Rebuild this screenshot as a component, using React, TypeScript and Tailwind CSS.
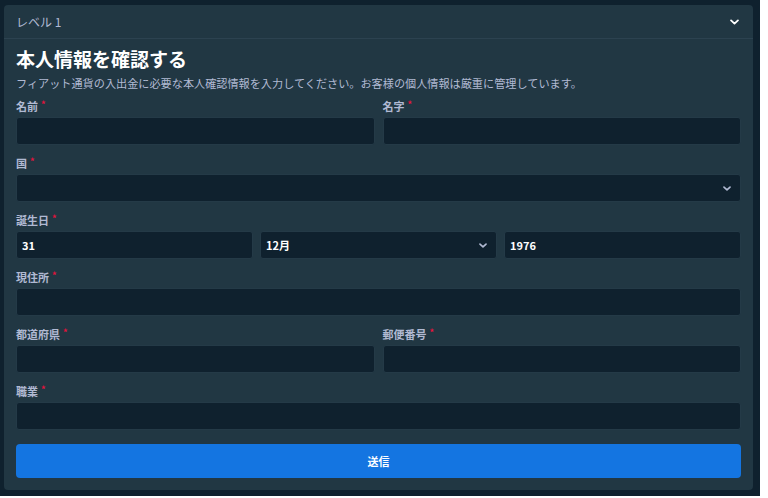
import React from 'react';

const font = { fontFamily: '"Noto Sans CJK JP", "Noto Sans", sans-serif' };

const Chevron = ({ className }: { className?: string }) => (
  <svg viewBox="0 0 10 6" className={className} fill="none">
    <path d="M1.2 1.2 5 4.8 8.8 1.2" stroke="currentColor" strokeWidth="2" strokeLinecap="round" strokeLinejoin="round" />
  </svg>
);

const Label = ({ text }: { text: string }) => (
  <div className="h-4 flex items-center text-[11px] font-bold text-[#b1bad3] leading-none">
    <span>{text}</span>
    <span className="ml-[3px] text-[#e9113c] text-[9px] -mt-[3px]">*</span>
  </div>
);

const Input = ({ value, select }: { value?: string; select?: boolean }) => (
  <div className="mt-[3px] h-7 rounded-[3px] bg-[#0f212e] border border-[#243a47] flex items-center justify-between px-[5px] text-[11px] font-bold text-white">
    <span>{value}</span>
    {select && <Chevron className="w-[8px] h-[5px] mr-[4px] text-[#b1bad3]" />}
  </div>
);

const Field = ({ label, value, select }: { label: string; value?: string; select?: boolean }) => (
  <div>
    <Label text={label} />
    <Input value={value} select={select} />
  </div>
);

export default function App() {
  return (
    <div className="w-[768px] h-[498px] bg-white" style={font}>
      <div className="w-[760px] h-[496px] bg-[#0f212e] pl-[4px] pt-[5px]">
        <div className="w-[749px] h-[485px] bg-[#213743] rounded-[4px] flex flex-col">
          {/* Header */}
          <div className="h-[34px] flex items-center justify-between pl-[12px] pr-[14px] border-b border-[#2c4250]">
            <span className="text-[12px] text-[#b1bad3]">レベル 1</span>
            <Chevron className="w-[9px] h-[6px] text-white" />
          </div>

          <div className="pl-[12px] pr-[12px] flex flex-col">
            <h1 className="mt-[8px] h-[24px] leading-[24px] text-[19px] font-bold text-white">本人情報を確認する</h1>
            <p className="mt-[4px] h-[16px] leading-[16px] text-[11.15px] text-[#b1bad3]">
              フィアット通貨の入出金に必要な本人確認情報を入力してください。お客様の個人情報は厳重に管理しています。
            </p>

            <div className="mt-[7px] flex flex-col gap-[10px]">
              <div className="grid grid-cols-2 gap-[8px]">
                <Field label="名前" />
                <Field label="名字" />
              </div>
              <Field label="国" select />
              <div>
                <Label text="誕生日" />
                <div className="grid grid-cols-3 gap-[7px]">
                  <Input value="31" />
                  <Input value="12月" select />
                  <Input value="1976" />
                </div>
              </div>
              <Field label="現住所" />
              <div className="grid grid-cols-2 gap-[8px]">
                <Field label="都道府県" />
                <Field label="郵便番号" />
              </div>
              <Field label="職業" />
            </div>

            <button className="mt-[14px] h-[34px] rounded-[4px] bg-[#1475e1] text-white text-[11px] font-bold">
              送信
            </button>
          </div>
        </div>
      </div>
    </div>
  );
}
